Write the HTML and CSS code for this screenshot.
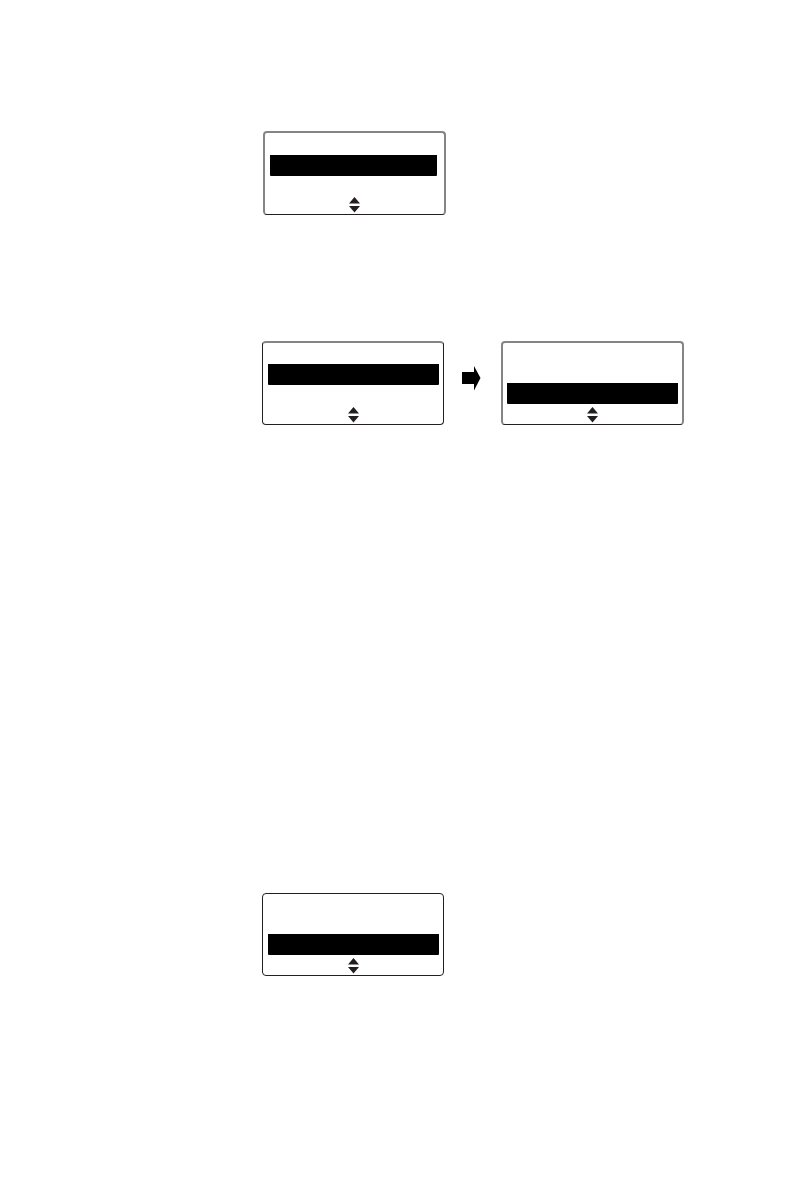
FILE: index.html
```html
<!DOCTYPE html>
<html lang="en">
<head>
<meta charset="utf-8">
<title>Display screens</title>
<link rel="stylesheet" href="styles.css">
</head>
<body>
<svg class="defs" aria-hidden="true">
  <symbol id="updown" viewBox="0 0 11 16">
    <path d="M5.5 0 L11 6.6 H0 Z M0 9 H11 L5.5 15.5 Z" fill="#231f20"/>
  </symbol>
</svg>
<main class="page">
  <section class="step step-first">
    <div class="screen screen-soft">
      <div class="selection selection-short"></div>
      <svg class="updown"><use href="#updown"/></svg>
    </div>
  </section>
  <section class="step step-second">
    <div class="screen screen-soft-top">
      <div class="selection"></div>
      <svg class="updown"><use href="#updown"/></svg>
    </div>
    <svg class="arrow" viewBox="0 0 19 25"><path d="M0 6 H12 V0 L18.5 12 L12 24.5 V18 H0 Z"/></svg>
    <div class="screen screen-soft">
      <div class="selection selection-low"></div>
      <svg class="updown"><use href="#updown"/></svg>
    </div>
  </section>
  <section class="step">
    <div class="screen">
      <div class="selection selection-low"></div>
      <svg class="updown"><use href="#updown"/></svg>
    </div>
  </section>
</main>
</body>
</html>
```

FILE: styles.css
```css
* {
  box-sizing: border-box;
}

body {
  margin: 0;
  background: #fff;
  font-family: "Liberation Sans", Arial, sans-serif;
}

.defs {
  display: block;
  width: 0;
  height: 0;
}

.page {
  display: flex;
  flex-direction: column;
  padding: 131px 0 216px 262px;
}

.step {
  display: flex;
}

.step-first {
  margin-bottom: 126px;
  padding-left: 1px;
}

.step-second {
  margin-bottom: 468px;
}

.screen {
  display: flex;
  flex-direction: column;
  align-items: center;
  width: 182px;
  border: 1px solid #231f20;
  border-radius: 4px;
  padding: 22px 4px 1px 5px;
}

.screen-soft {
  width: 183px;
  border-color: #858585;
  border-width: 2px 2px 1px;
  border-bottom-color: #231f20;
  padding-left: 4px;
}

.screen-soft-top {
  border-top: 2px solid #858585;
  padding-top: 21px;
}

.selection {
  align-self: stretch;
  height: 21px;
  border-radius: 0 0 1px 1px;
  background: #000;
}

.selection-short {
  margin-right: 3px;
  margin-left: 1px;
}

.selection-low {
  margin-top: 18px;
}

.updown {
  width: 11px;
  height: 16px;
  margin-top: 21px;
}

.screen-soft-top .updown {
  margin-top: 22px;
}

.selection-low + .updown {
  margin-top: 3px;
}

.arrow {
  width: 19px;
  height: 25px;
  margin: 25px 20px 0 18px;
}
```
